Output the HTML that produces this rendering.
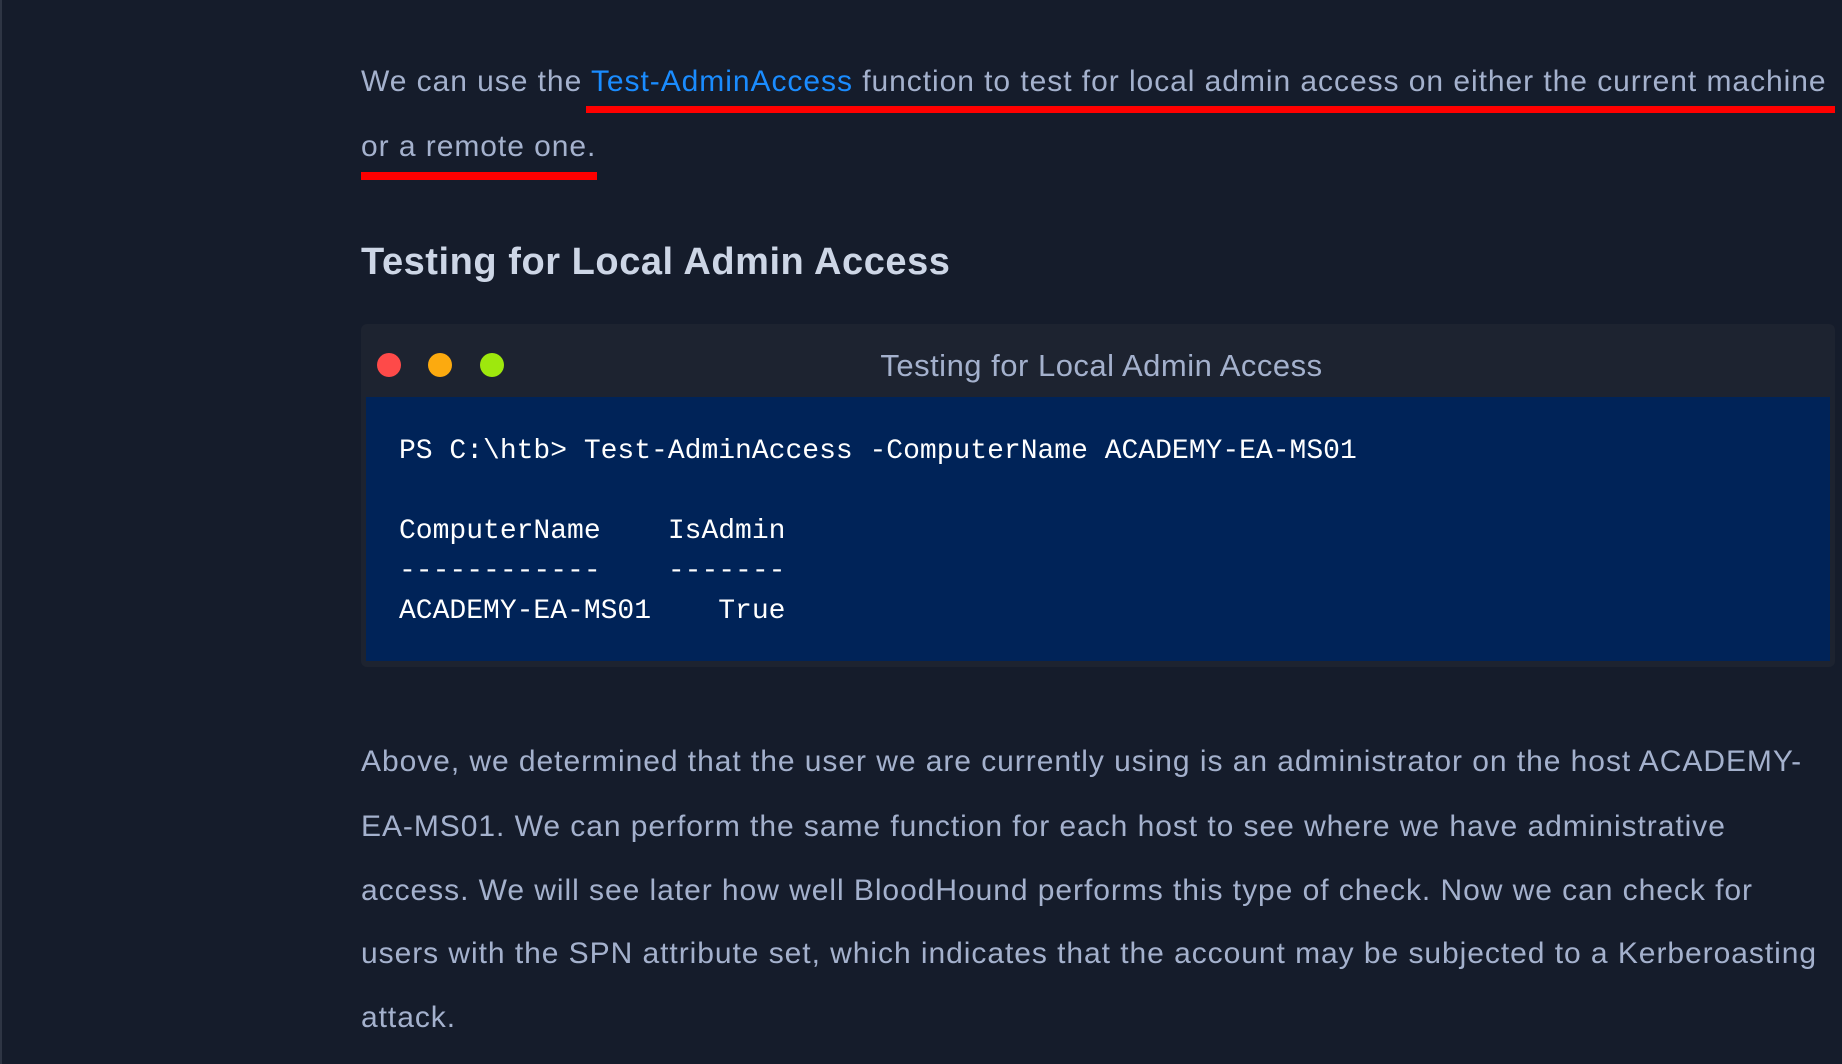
<!DOCTYPE html>
<html><head><meta charset="utf-8"><style>
html,body{margin:0;padding:0;}
body{width:1842px;height:1064px;background:#151c2b;position:relative;overflow:hidden;font-family:"Liberation Sans",sans-serif;}
.edge{position:absolute;left:0;top:0;width:2px;height:1064px;background:#2e3544;}
.t{position:absolute;left:361px;white-space:nowrap;font-size:30px;color:#a4b1cd;line-height:64px;height:64px;letter-spacing:0.95px;}
.lk{color:#1a8cff;}
.red{position:absolute;background:#ff0000;}
h2{position:absolute;left:361px;top:238px;margin:0;font-size:38px;line-height:48px;font-weight:bold;color:#cdd6e6;white-space:nowrap;letter-spacing:0.55px;}
.box{position:absolute;left:361px;top:324px;width:1474px;height:343px;background:#1d2330;border-radius:6px;}
.dot{position:absolute;top:353px;width:24px;height:24px;border-radius:50%;}
.ttl{position:absolute;left:0;width:100%;top:346px;text-align:center;font-size:31px;color:#a4b1cd;line-height:40px;padding-left:361px;box-sizing:border-box;letter-spacing:0.5px;}
.blue{position:absolute;left:366px;top:397px;width:1464px;height:264px;background:#002358;}
.code{position:absolute;left:399px;font-family:"Liberation Mono",monospace;font-size:28px;color:#ffffff;line-height:40px;white-space:pre;}
</style></head><body>
<div class="edge"></div>
<div class="t" style="top:50px">We can use the <span class="lk">Test-AdminAccess</span> function to test for local admin access on either the current machine</div>
<div class="red" style="left:586px;top:106px;width:1249px;height:7px"></div>
<div class="t" style="top:115px">or a remote one.</div>
<div class="red" style="left:361px;top:172px;width:236px;height:8px"></div>
<h2>Testing for Local Admin Access</h2>
<div class="box"></div>
<div class="dot" style="left:377px;background:#fe4a49"></div>
<div class="dot" style="left:428px;background:#fcaa0f"></div>
<div class="dot" style="left:480px;background:#9ee80d"></div>
<div class="ttl" style="left:0">Testing for Local Admin Access</div>
<div class="blue"></div>
<div class="code" style="top:432px">PS C:\htb&gt; Test-AdminAccess -ComputerName ACADEMY-EA-MS01</div>
<div class="code" style="top:512px">ComputerName    IsAdmin</div>
<div class="code" style="top:552px">------------    -------</div>
<div class="code" style="top:592px">ACADEMY-EA-MS01    True</div>
<div class="t" style="top:730px">Above, we determined that the user we are currently using is an administrator on the host ACADEMY-</div>
<div class="t" style="top:795px">EA-MS01. We can perform the same function for each host to see where we have administrative</div>
<div class="t" style="top:859px">access. We will see later how well BloodHound performs this type of check. Now we can check for</div>
<div class="t" style="top:922px">users with the SPN attribute set, which indicates that the account may be subjected to a Kerberoasting</div>
<div class="t" style="top:986px">attack.</div>
</body></html>
